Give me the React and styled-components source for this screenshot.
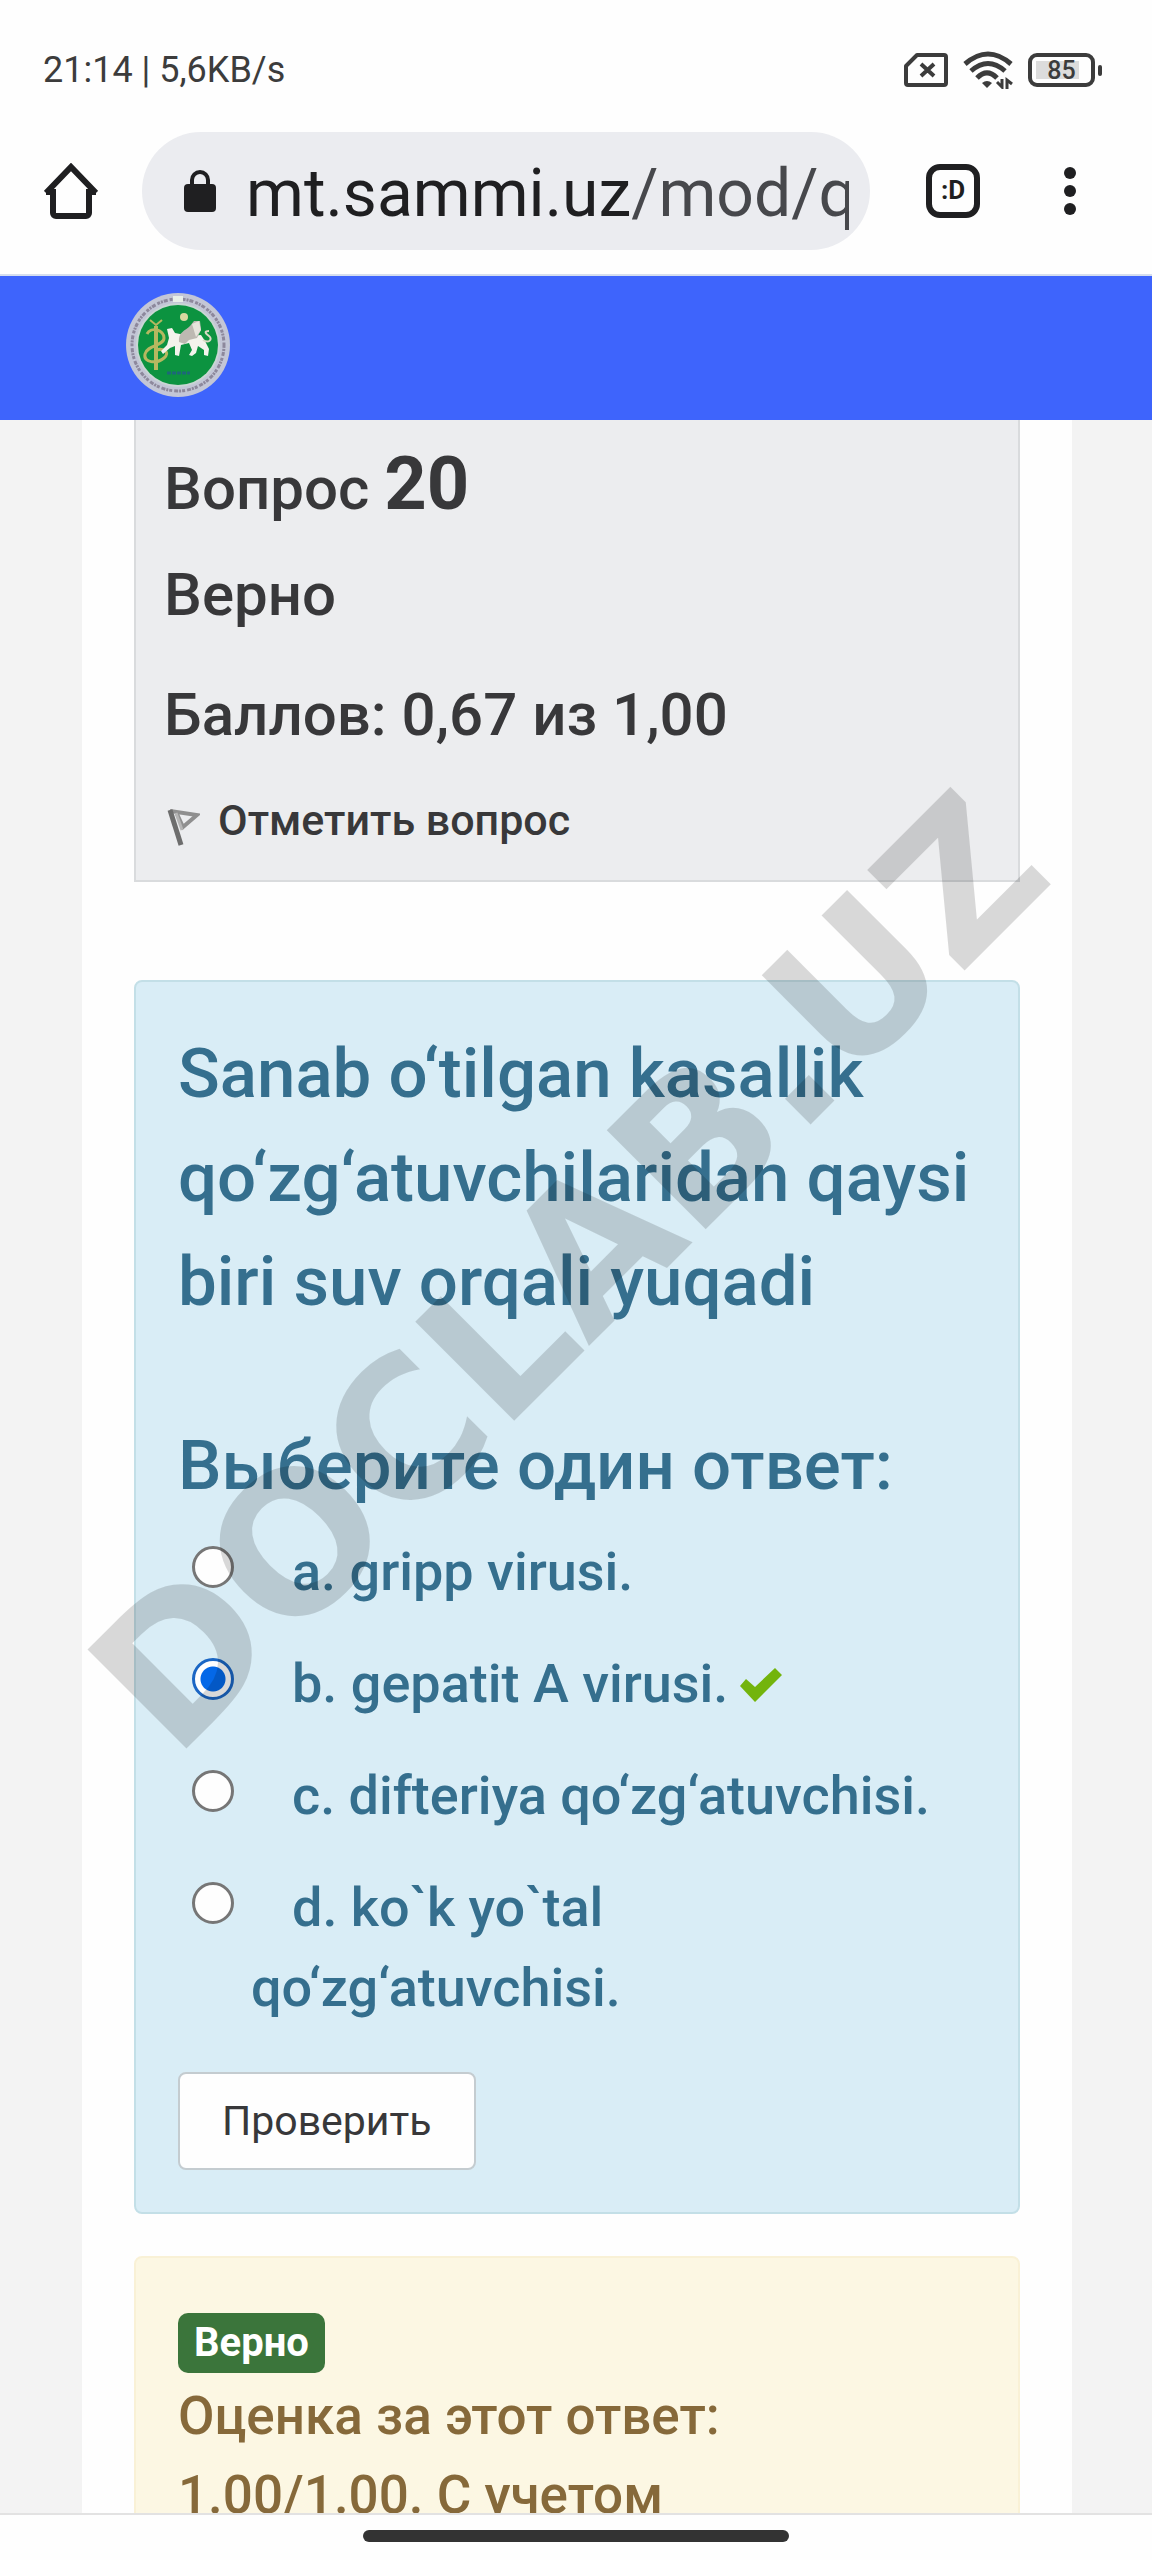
import React, { useState } from 'react'
import styled, { createGlobalStyle, css } from 'styled-components'

const OPTIONS = [
  { id: 'a', text: 'gripp virusi.' },
  { id: 'b', text: 'gepatit A virusi.', correct: true },
  { id: 'c', text: 'difteriya qo‘zg‘atuvchisi.' },
  { id: 'd', text: 'ko`k yo`tal qo‘zg‘atuvchisi.' },
]

const SimIcon = () => (
  <svg width="44" height="34" viewBox="0 0 44 34" fill="none" stroke="#3c3c3c" strokeWidth="4">
    <path d="M13 2H40a2 2 0 0 1 2 2V30a2 2 0 0 1-2 2H4a2 2 0 0 1-2-2V13Z" strokeLinejoin="round" />
    <path d="M17 11l13 12M30 11l-13 12" />
  </svg>
)

const WifiIcon = () => (
  <svg width="50" height="38" viewBox="0 0 50 38" fill="none" stroke="#3c3c3c" strokeWidth="5">
    <path d="M2 13Q25 -7 48 13" />
    <path d="M8 20Q25 5 42 20" />
    <path d="M14 27Q24 17 34 27" />
    <path d="M19 32Q24 28 29 32L24 37Z" fill="#3c3c3c" stroke="none" />
    <path d="M34 31l5 5V28M44 38V29l5 4" strokeWidth="3" />
  </svg>
)

const HomeIcon = () => (
  <svg width="54" height="56" viewBox="0 0 54 56" fill="none" stroke="#1f1f21" strokeWidth="6">
    <path d="M2 30L27 4L52 30M2 29H9V50a3 3 0 0 0 3 3H42a3 3 0 0 0 3-3V29H52" strokeLinejoin="miter" />
  </svg>
)

const LockIcon = () => (
  <svg width="32" height="42" viewBox="0 0 32 42">
    <rect x="0" y="14" width="32" height="28" rx="4" fill="#1f1f21" />
    <path d="M8 16V10a8 8 0 0 1 16 0V16" fill="none" stroke="#1f1f21" strokeWidth="4" />
  </svg>
)

const DotsIcon = () => (
  <svg width="14" height="50" viewBox="0 0 14 50" fill="#1f1f21">
    <circle cx="7" cy="7" r="6" />
    <circle cx="7" cy="25" r="6" />
    <circle cx="7" cy="43" r="6" />
  </svg>
)

const FlagIcon = () => (
  <svg width="36" height="38" viewBox="0 0 36 38" fill="none">
    <path d="M6 3L33 7L19 19L13 6" stroke="#8f8f8f" strokeWidth="4" />
    <path d="M12 5L18 22" stroke="#b5b5b5" strokeWidth="3" />
    <path d="M6 2L17 37" stroke="#6d6d6d" strokeWidth="5" />
  </svg>
)

const TickIcon = () => (
  <svg width="42" height="34" viewBox="0 0 42 34">
    <path d="M0 18L6 11L15 19L35 0L42 7L15 34Z" fill="#73b40c" />
  </svg>
)

const Crest = () => (
  <svg width="106" height="106" viewBox="0 0 106 106">
    <circle cx="53" cy="53" r="52" fill="#c3c6d6" />
    <circle cx="53" cy="53" r="46" fill="none" stroke="#8d889c" strokeWidth="3" strokeDasharray="3 1 2 1 4 2" />
    <circle cx="53" cy="53" r="42" fill="#c9d6d4" />
    <circle cx="53" cy="53" r="40" fill="#0c9340" />
    <rect x="48" y="4" width="10" height="6" fill="#e8efe8" />
    <circle cx="59" cy="25" r="4" fill="#d8d8a0" />
    <g fill="none" stroke="#b5b860" strokeWidth="3">
      <path d="M31 34V78" strokeWidth="4" />
      <path d="M25 28L31 33L37 28" strokeWidth="2" />
      <path d="M22 42C26 34 39 38 39 46S22 53 20 62S32 72 39 66S38 56 31 58" />
    </g>
    <path
      d="M42 37L47 36L50 41L55 42L64 44L76 43L80 49L84 57L83 64L79 63L79 58L73 54L71 61L67 64L64 63L67 58L64 51L56 53L54 64L50 63L50 54L45 56L38 62L36 59L42 53L44 46Z"
      fill="#f3f3ec"
    />
    <path d="M54 50C53 40 60 39 65 34L69 29L75 29L76 38L72 46L64 48L60 52Z" fill="#bdb9b2" />
    <path d="M67 32L74 29L76 38L71 45" fill="#e6e4dc" />
    <path d="M78 48C84 52 88 47 84 44S79 39 84 39" fill="none" stroke="#d9d9c4" strokeWidth="2" />
    <path d="M42 81H65" stroke="#1d6878" strokeWidth="3" strokeDasharray="4 1" />
  </svg>
)

const App = () => {
  const [answer, setAnswer] = useState('b')

  return (
    <Screen>
      <GlobalStyle />
      <StatusBar>
        <span>21:14 | 5,6KB/s</span>
        <StatusIcons>
          <SimIcon />
          <WifiIcon />
          <Battery>
            <Charge>85</Charge>
          </Battery>
        </StatusIcons>
      </StatusBar>

      <Toolbar>
        <IconButton aria-label="Home"><HomeIcon /></IconButton>
        <AddressBar>
          <LockIcon />
          <Url>mt.sammi.uz<UrlPath>/mod/q</UrlPath></Url>
        </AddressBar>
        <IconButton aria-label="Tabs"><TabCount>:D</TabCount></IconButton>
        <IconButton aria-label="Menu"><DotsIcon /></IconButton>
      </Toolbar>

      <SiteHeader>
        <a href="#home" aria-label="Sammi"><Crest /></a>
      </SiteHeader>

      <Viewport>
        <Main>
          <Info>
            <InfoLine as="h3">Вопрос <QuestionNumber>20</QuestionNumber></InfoLine>
            <InfoLine $gap="34px">Верно</InfoLine>
            <InfoLine $gap="48px">Баллов: 0,67 из 1,00</InfoLine>
            <FlagLink href="#flag"><FlagIcon />Отметить вопрос</FlagLink>
          </Info>

          <Question>
            <Prompt>Sanab o‘tilgan kasallik qo‘zg‘atuvchilaridan qaysi biri suv orqali yuqadi</Prompt>
            <Answers>
              <Legend>Выберите один ответ:</Legend>
              {OPTIONS.map((o) => (
                <Option key={o.id}>
                  <Radio
                    id={`answer-${o.id}`}
                    name="answer"
                    checked={answer === o.id}
                    onChange={() => setAnswer(o.id)}
                  />
                  <OptionLabel htmlFor={`answer-${o.id}`}>
                    {`${o.id}. ${o.text}`}
                    {o.correct && <TickIcon />}
                  </OptionLabel>
                </Option>
              ))}
            </Answers>
            <CheckButton type="button">Проверить</CheckButton>
          </Question>

          <Feedback>
            <Badge>Верно</Badge>
            <Grade>Оценка за этот ответ: 1.00/1.00. С учетом</Grade>
          </Feedback>
        </Main>
      </Viewport>

      <GestureBar><Handle /></GestureBar>
      <Watermark><span>DOCLAB.UZ</span></Watermark>
    </Screen>
  )
}

const GlobalStyle = createGlobalStyle`
  * {
    box-sizing: border-box;
  }
  body {
    margin: 0;
    background: #fefefe;
    font-family: Roboto, "Liberation Sans", sans-serif;
  }
  svg {
    display: block;
    flex: none;
  }
`

const Screen = styled.div`
  position: relative;
  display: flex;
  flex-direction: column;
  height: 100vh;
  overflow: hidden;
`

const StatusBar = styled.div`
  display: flex;
  flex: none;
  align-items: center;
  justify-content: space-between;
  height: 132px;
  padding: 8px 57px 0 43px;
  color: #3c3c3c;
  font-size: 36px;
`

const StatusIcons = styled.div`
  display: flex;
  align-items: center;
  gap: 15px;
`

const Battery = styled.div`
  position: relative;
  width: 67px;
  height: 34px;
  padding: 4px;
  border: 4px solid #3c3c3c;
  border-radius: 9px;
  &::after {
    content: '';
    position: absolute;
    top: 8px;
    right: -11px;
    width: 4px;
    height: 11px;
    border-radius: 2px;
    background: #3c3c3c;
  }
`

const Charge = styled.div`
  height: 100%;
  background: linear-gradient(to right, #dcdcdc 85%, transparent 85%);
  font-size: 25px;
  font-weight: 500;
  line-height: 19px;
  text-align: center;
`

const Toolbar = styled.div`
  display: flex;
  flex: none;
  align-items: center;
  padding: 0 75px 24px 44px;
  border-bottom: 2px solid #d5deee;
`

const IconButton = styled.button`
  display: flex;
  flex: none;
  padding: 0;
  border: 0;
  background: none;
  & + & {
    margin-left: 83px;
  }
`

const AddressBar = styled.div`
  display: flex;
  flex: 1;
  min-width: 0;
  align-items: center;
  gap: 30px;
  height: 118px;
  margin: 0 56px 0 44px;
  padding: 0 21px 0 42px;
  border-radius: 59px;
  background: #ebecf0;
`

const Url = styled.div`
  flex: 1;
  overflow: hidden;
  padding-top: 6px;
  color: #1f1f21;
  font-size: 66px;
  line-height: 90px;
  white-space: nowrap;
`

const UrlPath = styled.span`
  color: #47484c;
`

const TabCount = styled.span`
  display: block;
  width: 54px;
  height: 54px;
  border: 6px solid #1f1f21;
  border-radius: 14px;
  color: #1f1f21;
  font: bold 26px/40px Roboto, sans-serif;
  text-align: center;
`

const SiteHeader = styled.header`
  display: flex;
  flex: none;
  align-items: flex-start;
  height: 144px;
  padding: 16px 125px;
  background: #3e64fc;
`

const Viewport = styled.div`
  flex: 1;
  min-height: 0;
  overflow: hidden;
  background: #f3f3f3;
`

const Main = styled.main`
  margin: 0 80px 0 82px;
  padding: 0 52px;
  background: #fefefe;
  font-weight: 500;
`

const Info = styled.section`
  padding: 26px 28px 34px;
  border: 2px solid #d9dbdd;
  border-top: 0;
  background: #ecedef;
  color: #38383a;
`

const InfoLine = styled.p`
  margin: ${(p) => p.$gap || 0} 0 0;
  font-size: 60px;
  font-weight: 500;
  line-height: 72px;
`

const QuestionNumber = styled.span`
  font-size: 74px;
  font-weight: 700;
  line-height: 76px;
`

const FlagLink = styled.a`
  display: flex;
  align-items: center;
  gap: 18px;
  margin-top: 43px;
  color: inherit;
  font-size: 43px;
  line-height: 52px;
  text-decoration: none;
  svg {
    align-self: flex-end;
  }
`

const card = css`
  border: 2px solid;
  border-radius: 8px;
`

const Question = styled.section`
  ${card}
  margin-top: 98px;
  padding: 40px 42px 42px;
  border-color: #c3dfe7;
  background: #d9edf6;
  color: #356f8e;
`

const Prompt = styled.p`
  margin: 0 0 80px;
  font-size: 69px;
  line-height: 104px;
`

const Answers = styled.fieldset`
  min-width: 0;
  margin: 0;
  padding: 0;
  border: 0;
`

const Legend = styled.legend`
  margin-bottom: 14px;
  padding: 0;
  font-size: 69px;
  line-height: 104px;
`

const Option = styled.div`
  display: flex;
  align-items: flex-start;
  padding-left: 14px;
  & + & {
    margin-top: 32px;
  }
`

const Radio = styled.input.attrs({ type: 'radio' })`
  flex: none;
  width: 42px;
  height: 42px;
  margin: 14px 17px 0 0;
  appearance: none;
  border: 3px solid #767676;
  border-radius: 50%;
  background: #fefefe;
  &:checked {
    border-color: #1b66c4;
    background: radial-gradient(circle, #0468e8 12px, #fefefe 13px);
  }
`

const OptionLabel = styled.label`
  font-size: 54px;
  line-height: 80px;
  text-indent: 41px;
  svg {
    display: inline-block;
    margin-left: 12px;
  }
`

const CheckButton = styled.button`
  display: block;
  height: 98px;
  margin-top: 44px;
  padding: 0 42px;
  border: 2px solid #c4ccd0;
  border-radius: 8px;
  background: #fefefe;
  color: #38383a;
  font-family: inherit;
  font-size: 41px;
`

const Feedback = styled.section`
  ${card}
  margin-top: 42px;
  padding: 55px 42px;
  border-color: #f9f1d6;
  background: #fcf7e3;
  color: #86693a;
`

const Badge = styled.span`
  display: block;
  width: fit-content;
  padding: 0 16px;
  border-radius: 10px;
  background: #3b753b;
  color: #fff;
  font-size: 40px;
  font-weight: 700;
  line-height: 60px;
`

const Grade = styled.p`
  max-width: 640px;
  margin: 4px 0 0;
  font-size: 53px;
  line-height: 79px;
`

const GestureBar = styled.div`
  display: flex;
  flex: none;
  justify-content: center;
  height: 47px;
  padding-top: 15px;
  border-top: 2px solid #e2e2e2;
  background: #fefefe;
`

const Handle = styled.div`
  width: 37%;
  height: 12px;
  border-radius: 6px;
  background: #333;
`

// overlaps everything, lets clicks through
const Watermark = styled.div`
  position: absolute;
  inset: 0 16px 16px 0;
  display: flex;
  align-items: center;
  justify-content: center;
  color: rgba(0, 0, 0, 0.15);
  font: bold 192px "DejaVu Sans", sans-serif;
  pointer-events: none;
  span {
    transform: rotate(-45deg);
  }
`

export default App
